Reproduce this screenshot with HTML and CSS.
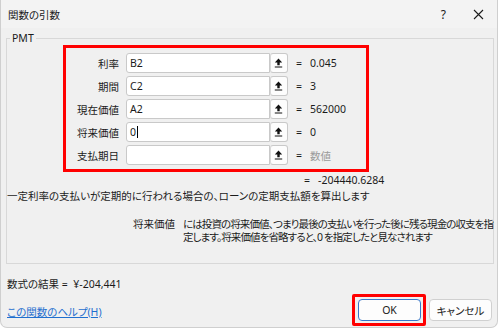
FILE: index.html
```html
<!DOCTYPE html>
<html lang="ja">
<head>
  <meta charset="UTF-8">
  <title>関数の引数</title>
  <link rel="stylesheet" href="styles.css">
</head>
<body>

<div class="window">
  <div class="titlebar">
    <span class="title">関数の引数</span>
    <span class="help">?</span>
    <svg class="close" width="11" height="11" viewBox="0 0 11 11">
      <path d="M1 1 L10 10 M10 1 L1 10" stroke="#1b1b1b" stroke-width="1.1"/>
    </svg>
  </div>

  <fieldset class="group">
    <legend>PMT</legend>

    <div class="args">
      <div class="arg">
        <label>利率</label>
        <div class="ref"><div class="field">B2</div><span class="pick"><svg width="9" height="10" viewBox="0 0 9 10"><path d="M4.5 0.5 L0.8 4.6 H3.3 V7.3 H5.7 V4.6 H8.2 Z M0.8 8.4 H8.2 V9.6 H0.8 Z" fill="#111"/></svg></span></div>
        <span class="eq">=</span><span class="val">0.045</span>
      </div>
      <div class="arg">
        <label>期間</label>
        <div class="ref"><div class="field">C2</div><span class="pick"><svg width="9" height="10" viewBox="0 0 9 10"><path d="M4.5 0.5 L0.8 4.6 H3.3 V7.3 H5.7 V4.6 H8.2 Z M0.8 8.4 H8.2 V9.6 H0.8 Z" fill="#111"/></svg></span></div>
        <span class="eq">=</span><span class="val">3</span>
      </div>
      <div class="arg">
        <label>現在価値</label>
        <div class="ref"><div class="field">A2</div><span class="pick"><svg width="9" height="10" viewBox="0 0 9 10"><path d="M4.5 0.5 L0.8 4.6 H3.3 V7.3 H5.7 V4.6 H8.2 Z M0.8 8.4 H8.2 V9.6 H0.8 Z" fill="#111"/></svg></span></div>
        <span class="eq">=</span><span class="val">562000</span>
      </div>
      <div class="arg">
        <label>将来価値</label>
        <div class="ref"><div class="field">0<span class="caret"></span></div><span class="pick"><svg width="9" height="10" viewBox="0 0 9 10"><path d="M4.5 0.5 L0.8 4.6 H3.3 V7.3 H5.7 V4.6 H8.2 Z M0.8 8.4 H8.2 V9.6 H0.8 Z" fill="#111"/></svg></span></div>
        <span class="eq">=</span><span class="val">0</span>
      </div>
      <div class="arg">
        <label>支払期日</label>
        <div class="ref"><div class="field"></div><span class="pick"><svg width="9" height="10" viewBox="0 0 9 10"><path d="M4.5 0.5 L0.8 4.6 H3.3 V7.3 H5.7 V4.6 H8.2 Z M0.8 8.4 H8.2 V9.6 H0.8 Z" fill="#111"/></svg></span></div>
        <span class="eq">=</span><span class="val muted">数値</span>
      </div>
    </div>

    <div class="result"><span class="eq">=</span><span class="val">-204440.6284</span></div>

    <p class="desc">一定利率の支払いが定期的に行われる場合の、ローンの定期支払額を算出します</p>

    <div class="arg-help">
      <span class="name">将来価値</span>
      <p>には投資の将来価値、つまり最後の支払いを行った後に残る現金の収支を指<br>定します。将来価値を省略すると、0 を指定したと見なされます</p>
    </div>
  </fieldset>

  <div class="formula">数式の結果 =&nbsp;&nbsp;¥-204,441</div>

  <div class="footer">
    <a href="#" class="help-link">この関数のヘルプ(H)</a>
    <div class="buttons">
      <div class="mark"><button class="btn default">OK</button></div>
      <button class="btn">キャンセル</button>
    </div>
  </div>
</div>

</body>
</html>
```

FILE: styles.css
```css
body {
  margin: 0;
  background-color: #ffffff;
  font-family: "Noto Sans", "Noto Sans CJK JP", sans-serif;
  font-size: 10.5px;
  font-feature-settings: "palt";
  color: #1b1b1b;
}
.window {
  width: 496px;
  height: 327px;
  background-color: #f0f0f0;
  border: 1px solid #cfcfcf;
  border-top: none;
  border-radius: 0 0 7px 7px;
  overflow: hidden;
}
.titlebar {
  height: 28px;
  display: flex;
  align-items: center;
  padding: 0 13px 0 7px;
  background-color: #f3f3f3;
}
.title {
  flex: 1;
}
.help {
  font-size: 12px;
  margin-right: 27px;
}
.group {
  margin: 3px 5px 0 5px;
  padding: 0 0 8px 0;
  border: 1px solid #d8d8d8;
  height: 233px;
  box-sizing: border-box;
}
.group legend {
  margin-left: 3px;
  padding: 0 2px;
  line-height: 14px;
}
.args {
  margin: 0 0 0 56px;
  width: 300px;
  border: 3px solid #ff0000;
  padding: 5px 0 4px 0;
  display: flex;
  flex-direction: column;
  gap: 3px;
}
.arg {
  display: grid;
  grid-template-columns: 53px 169px 22px auto;
  align-items: center;
  height: 20px;
}
.arg label {
  text-align: right;
}
.ref {
  display: flex;
  margin-left: 7px;
  height: 20px;
}
.field {
  width: 145px;
  height: 18px;
  line-height: 18px;
  border: 1px solid #c9c9c9;
  border-radius: 3px 0 0 3px;
  background-color: #ffffff;
  padding-left: 3px;
}
.caret {
  display: inline-block;
  width: 1px;
  height: 12px;
  background-color: #000;
  vertical-align: -2px;
  margin-left: 1px;
}
.pick {
  width: 17px;
  height: 18px;
  border: 1px solid #c9c9c9;
  border-left-color: #d8d8d8;
  border-radius: 3px;
  background-color: #fdfdfd;
  display: flex;
  align-items: center;
  justify-content: center;
}
.eq {
  text-align: center;
}
.val.muted {
  color: #9a9a9a;
}
.result {
  display: flex;
  padding-left: 289px;
  height: 14px;
  line-height: 14px;
  margin-top: 1px;
}
.result .eq {
  width: 22px;
}
.desc {
  margin: 2px 0 0 0;
  line-height: 14px;
}
.arg-help {
  display: flex;
  margin-top: 15px;
  line-height: 13px;
}
.arg-help .name {
  width: 168px;
  text-align: right;
  flex-shrink: 0;
}
.arg-help p {
  margin: 0 0 0 8px;
  white-space: nowrap;
  letter-spacing: -0.9px;
}
.formula {
  margin: 13px 0 0 6px;
  line-height: 14px;
}
.footer {
  display: flex;
  align-items: center;
  justify-content: space-between;
  padding: 0 5px 0 6px;
  margin-top: 3px;
}
.help-link {
  color: #1f6fcf;
  text-decoration: underline;
  margin-top: 3px;
}
.buttons {
  display: flex;
  align-items: center;
  gap: 3px;
}
.mark {
  border: 3px solid #ff0000;
  padding: 2px 2px 2px 3px;
  border-radius: 2px;
  display: flex;
}
.btn {
  width: 63px;
  height: 22px;
  font-family: inherit;
  font-size: 10.5px;
  font-feature-settings: "palt";
  color: #1b1b1b;
  background-color: #fdfdfd;
  border: 1px solid #d0d0d0;
  border-radius: 4px;
  padding: 0;
}
.btn.default {
  border-color: #3a78c9;
}
```
